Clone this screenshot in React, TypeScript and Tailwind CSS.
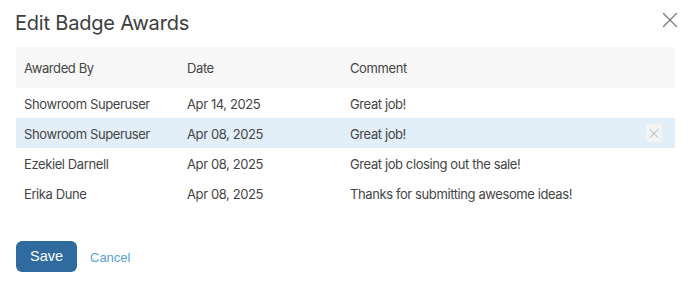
import { X } from "lucide-react";

const rows = [
  { by: "Showroom Superuser", date: "Apr 14, 2025", comment: "Great job!" },
  { by: "Showroom Superuser", date: "Apr 08, 2025", comment: "Great job!", active: true },
  { by: "Ezekiel Darnell", date: "Apr 08, 2025", comment: "Great job closing out the sale!" },
  { by: "Erika Dune", date: "Apr 08, 2025", comment: "Thanks for submitting awesome ideas!" },
];

export default function App() {
  return (
    <div className="w-[688px] h-[285px] bg-white font-['Inter',sans-serif] text-[#454545]">
      <div className="flex items-center justify-between pl-[15px] pr-[3px] pt-[6px] h-[40px]">
        <h1 className="text-[20px] text-[#3d3d3d] tracking-[-0.2px]">Edit Badge Awards</h1>
        <button className="text-[#7a7a7a] p-[2px] -mt-[7px]">
          <X size={26} strokeWidth={1.2} />
        </button>
      </div>

      <div className="mx-[16px] mt-[7px] w-[659px] text-[13px] tracking-[-0.4px]">
        <div className="grid grid-cols-[163px_163px_1fr] h-[41px] pt-[3px] items-center bg-[#f7f7f7] pl-[8px]">
          <span>Awarded By</span>
          <span>Date</span>
          <span>Comment</span>
        </div>
        {rows.map((r, i) => (
          <div
            key={i}
            className={
              "grid grid-cols-[163px_163px_1fr_auto] h-[30px] items-center pl-[8px] pr-[13px] " +
              (r.active ? "bg-[#e2eef8]" : "")
            }
          >
            <span className="pt-[3px]">{r.by}</span>
            <span className="pt-[3px]">{r.date}</span>
            <span className="pt-[3px]">{r.comment}</span>
            {r.active ? (
              <span className="w-[16px] h-[18px] rounded-[3px] bg-[#f2f4f5] flex items-center justify-center text-[#9a9a9a]">
                <X size={17} strokeWidth={1.2} />
              </span>
            ) : (
              <span />
            )}
          </div>
        ))}
      </div>

      <div className="flex items-center gap-[13px] ml-[16px] mt-[33px]">
        <button className="w-[61px] h-[31px] rounded-[6px] bg-[#2f6b9f] text-white text-[14.5px] font-['Liberation_Sans',sans-serif]">
          Save
        </button>
        <button className="text-[#5b9fd6] text-[13px] font-['Liberation_Sans',sans-serif] pt-[2px]">Cancel</button>
      </div>
    </div>
  );
}
